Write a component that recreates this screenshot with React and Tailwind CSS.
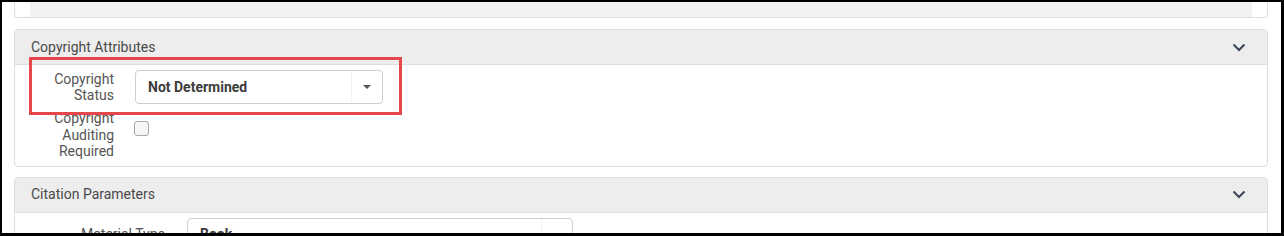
function Chevron() {
  return (
    <svg width="14" height="9" viewBox="0 0 14 9" className="block">
      <polyline points="1.5,1.5 7,7 12.5,1.5" fill="none" stroke="#3b4656" strokeWidth="2" />
    </svg>
  );
}

function Caret() {
  return (
    <svg width="8" height="4" viewBox="0 0 8 4" className="block">
      <polygon points="0,0 8,0 4,4" fill="#555" />
    </svg>
  );
}

function PanelHeader({ title }) {
  return (
    <div className="h-[35px] bg-[#ededed] border-b border-[#dedede] rounded-t-[4px] flex items-center justify-between pl-[16px] pr-[21px]">
      <span className="text-[14px] text-[#4a4a4a]">{title}</span>
      <Chevron />
    </div>
  );
}

function SelectBox({ value, width }) {
  return (
    <div className={`h-[34px] ${width} border border-[#cfcfcf] rounded-[4px] bg-white flex items-stretch`}>
      <div className="flex-1 flex items-center pl-[12px] text-[14px] font-bold text-[#3c3c3c]">{value}</div>
      <div className="w-[31px] border-l border-[#f3f3f3] flex items-center justify-center">
        <Caret />
      </div>
    </div>
  );
}

export default function App() {
  return (
    <div className="w-[1284px] h-[236px] bg-black pt-[2px] pl-[2px] pr-[3px] pb-[3px]" style={{ fontFamily: "Roboto, 'Liberation Sans', sans-serif" }}>
      <div className="h-full bg-white overflow-hidden pl-[12px] pr-[13px]">
        {/* previous section, cut off at the top */}
        <div className="h-[16px] border-x border-b border-[#dedede] rounded-b-[4px] px-[15px]">
          <div className="h-full bg-[#f2f2f2]"></div>
        </div>

        {/* Copyright Attributes */}
        <div className="relative mt-[11px] border border-[#dedede] rounded-[4px]">
          <PanelHeader title="Copyright Attributes" />
          <div className="pt-[5px] pb-[6px]">
            <div className="flex items-center">
              <div className="w-[99px] text-right text-[14px] leading-[16.5px] text-[#555]">
                Copyright<br />Status
              </div>
              <div className="ml-[21px]">
                <SelectBox value="Not Determined" width="w-[248px]" />
              </div>
            </div>
            <div className="flex items-start mt-[6px]">
              <div className="w-[99px] text-right text-[14px] leading-[16.5px] text-[#555]">
                Copyright<br />Auditing<br />Required
              </div>
              <div className="ml-[20px] mt-[11px] w-[15px] h-[15px] rounded-[3px] border border-[#a9a9a9] bg-[#f6f6f6]"></div>
            </div>
          </div>
          <div className="absolute left-[14px] top-[27px] w-[373px] h-[58px] border-[3px] border-[#e4484b]"></div>
        </div>

        {/* Citation Parameters */}
        <div className="mt-[10px] border border-[#dedede] rounded-[4px]">
          <PanelHeader title="Citation Parameters" />
          <div className="pt-[5px]">
            <div className="flex items-center">
              <div className="w-[150px] text-right text-[14px] leading-[16.5px] text-[#555]">Material Type</div>
              <div className="ml-[22px]">
                <SelectBox value="Book" width="w-[386px]" />
              </div>
            </div>
          </div>
        </div>
      </div>
    </div>
  );
}
